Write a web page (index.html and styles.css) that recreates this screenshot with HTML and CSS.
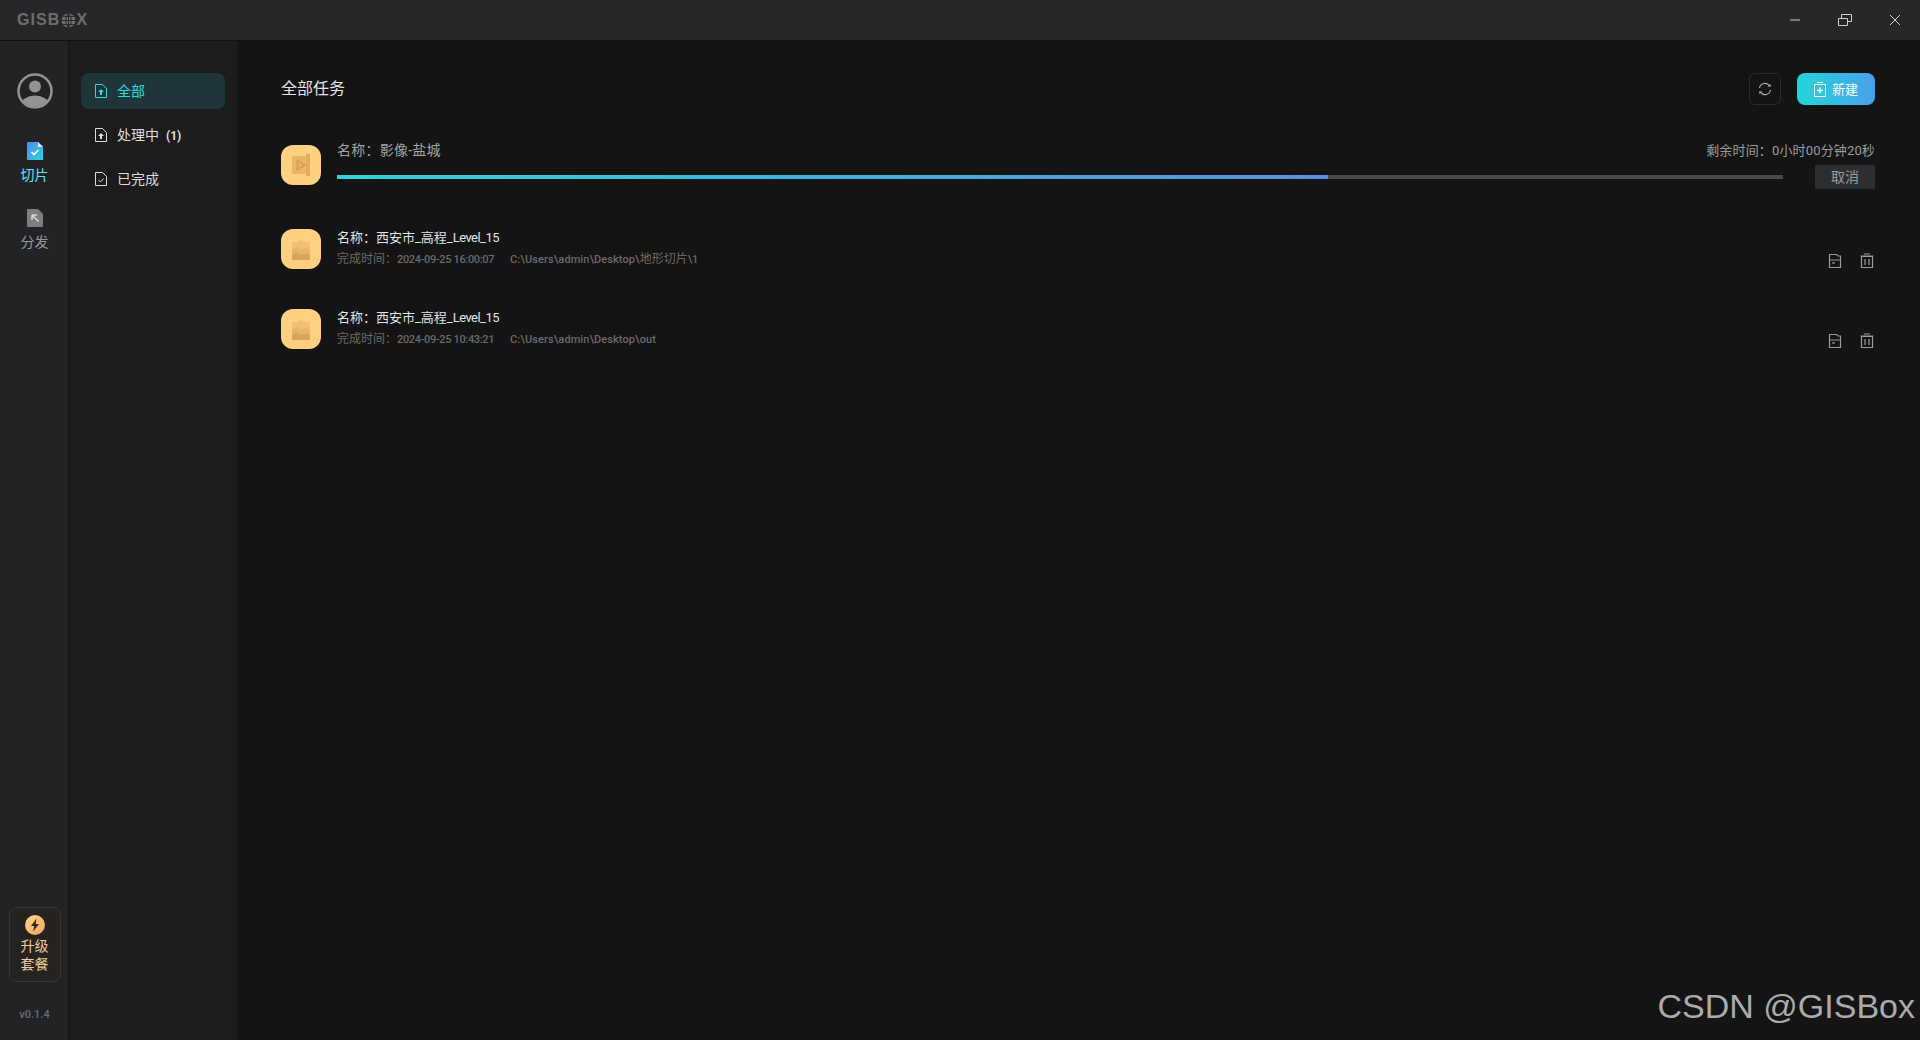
FILE: index.html
```html
<!DOCTYPE html>
<html lang="zh-CN">
<head>
<meta charset="utf-8">
<title>GISBox</title>
<link rel="stylesheet" href="styles.css">
</head>
<body>
<div class="app">
  <header class="titlebar">
    <div class="logo"><span>GISB</span><svg class="logo-globe" viewBox="0 0 14 14"><circle cx="7" cy="7" r="6.5" fill="#6e6e6e"/><path d="M0 7h14M7 0v14M2 3.2h10M2 10.8h10M7 .5C3.5 4 3.5 10 7 13.5M7 .5c3.500 3.500 3.500 9.500 0 13" fill="none" stroke="#262628" stroke-width=".9"/></svg><span>X</span></div>
    <div class="win-controls">
      <svg class="win-icon" viewBox="0 0 16 16"><path d="M3 8h10" stroke="#d0d0d0" stroke-width="1"/></svg>
      <svg class="win-icon" viewBox="0 0 16 16"><path d="M1.500 6.500h9v7h-9zM4.500 6.500v-4h10v7h-4" fill="none" stroke="#d0d0d0" stroke-width="1"/></svg>
      <svg class="win-icon" viewBox="0 0 16 16"><path d="M3 3l10 10M13 3L3 13" stroke="#d0d0d0" stroke-width="1"/></svg>
    </div>
  </header>
  <div class="workspace">
    <nav class="rail">
      <svg class="avatar" viewBox="0 0 36 36"><defs><clipPath id="av"><circle cx="18" cy="18" r="15.500"/></clipPath></defs><circle cx="18" cy="18" r="16.500" fill="#232325" stroke="#939395" stroke-width="2.500"/><circle cx="18" cy="13.500" r="6" fill="#939395"/><ellipse cx="18" cy="32" rx="14" ry="9.500" fill="#939395" clip-path="url(#av)"/></svg>
      <a class="rail-item active">
        <svg class="rail-icon" viewBox="0 0 16 18"><defs><linearGradient id="doc" x1="0" y1="0" x2="1" y2="1"><stop offset="0" stop-color="#5289f2"/><stop offset="1" stop-color="#2bd6d8"/></linearGradient></defs><path d="M1 0h10l5 5v12a1 1 0 0 1-1 1H1a1 1 0 0 1-1-1V1a1 1 0 0 1 1-1z" fill="url(#doc)"/><path d="M11 0l5 5h-5z" fill="#d5f0fb"/><path d="M4.500 10l2.500 2.500 4.500-4.500" fill="none" stroke="#fff" stroke-width="1.600"/></svg>
        <span>切片</span>
      </a>
      <a class="rail-item">
        <svg class="rail-icon" viewBox="0 0 16 18"><path d="M1 0h10l5 5v12a1 1 0 0 1-1 1H1a1 1 0 0 1-1-1V1a1 1 0 0 1 1-1z" fill="#7e7e80"/><path d="M5 6h5M5 6v5M5 6l6.500 6.500" fill="none" stroke="#d8d8d8" stroke-width="1.500"/></svg>
        <span>分发</span>
      </a>
      <div class="rail-spacer"></div>
      <div class="upgrade">
        <svg class="bolt" viewBox="0 0 20 20"><defs><linearGradient id="gold" x1="0" y1="0" x2="1" y2="1"><stop offset="0" stop-color="#ffd58c"/><stop offset="1" stop-color="#f0a55c"/></linearGradient></defs><circle cx="10" cy="10" r="10" fill="url(#gold)"/><path d="M11.500 3.500L6 11h3.200l-1 5.500L14 9h-3.300z" fill="#3a2a18"/></svg>
        <span>升级</span>
        <span>套餐</span>
      </div>
      <div class="version">v0.1.4</div>
    </nav>
    <aside class="sidebar">
      <a class="side-item active">
        <svg class="side-icon" viewBox="0 0 12 14"><path d="M.5.500h7l4 4v9H.5z" fill="none" stroke="currentColor"/><path d="M6 5l3 3H7v3H5V8H3z" fill="currentColor"/></svg>
        <span>全部</span>
      </a>
      <a class="side-item">
        <svg class="side-icon" viewBox="0 0 12 14"><path d="M.5.500h7l4 4v9H.5z" fill="none" stroke="currentColor"/><path d="M6 5l3 3H7v3H5V8H3z" fill="currentColor"/></svg>
        <span>处理中&nbsp;&nbsp;<b class="count">(1)</b></span>
      </a>
      <a class="side-item">
        <svg class="side-icon" viewBox="0 0 12 14"><path d="M.5.500h7l4 4v9H.5z" fill="none" stroke="currentColor"/><path d="M3.500 8l2 2 3-3.500" fill="none" stroke="currentColor"/></svg>
        <span>已完成</span>
      </a>
    </aside>
    <main class="main">
      <div class="main-head">
        <h1 class="main-title">全部任务</h1>
        <button class="btn-refresh">
          <svg class="refresh-icon" viewBox="0 0 14 14"><path d="M1.500 6A5.500 5.500 0 0 1 11.500 3.800M12.500 8A5.500 5.500 0 0 1 2.500 10.200" fill="none" stroke="#b0b0b0" stroke-width="1.200"/><path d="M13 4.500h-3.500l3-2.500zM1 9.500h3.500l-3 2.500z" fill="#b0b0b0"/></svg>
        </button>
        <button class="btn-new">
          <svg class="new-icon" viewBox="0 0 12 15"><path d="M.5 2.500h11v12H.5zM3 .5h6" fill="none" stroke="#fff"/><path d="M6 5.500v6M3 8.500h6" stroke="#fff" stroke-width="1.400"/></svg>
          <span>新建</span>
        </button>
      </div>
      <section class="tasks">
        <article class="task">
          <div class="task-icon"><svg class="task-glyph play" viewBox="0 0 18 22"><path d="M0 2h14v18H0z" fill="#eab768"/><path d="M14 0h4v22h-4z" fill="#e5ac5e"/><path d="M5.500 6.500l7 4.500-7 4.500z" fill="none" stroke="#d89f54" stroke-width="2"/></svg></div>
          <div class="task-body">
            <div class="progress-head">
              <span class="progress-name">名称&#xFF1A;影像-盐城</span>
              <span class="remaining">剩余时间&#xFF1A;0小时00分钟20秒</span>
            </div>
            <div class="progress-row">
              <div class="track"><div class="fill"></div></div>
              <button class="btn-cancel">取消</button>
            </div>
          </div>
        </article>
        <article class="task">
          <div class="task-icon"><svg class="task-glyph" viewBox="0 0 18 21"><path d="M0 3h5l4-3 3 3h6v18H0z" fill="#efc076"/><path d="M0 11l5-3 4 3 4-2 5 2v10H0z" fill="#e8b268"/><path d="M0 16l5-2 4 2 4-1 5 1v5H0z" fill="#dfa259"/></svg></div>
          <div class="task-body">
            <div class="task-name">名称&#xFF1A;西安市_高程_<span class="latin">Level_15</span></div>
            <div class="task-meta">完成时间&#xFF1A;<span class="latin">2024-09-25 16:00:07</span><span class="latin path">C:\Users\admin\Desktop\</span>地形切片<span class="latin">\1</span></div>
          </div>
          <div class="task-actions">
            <svg class="action-icon" viewBox="0 0 16 16"><path d="M2.500 7V1.500h7l1.500 1.500h2.500V14.500h-11V7h11" fill="none" stroke="#9a9a9a" stroke-width="1.200"/><path d="M5 10h3" stroke="#9a9a9a" stroke-width="1.200"/></svg>
            <svg class="action-icon" viewBox="0 0 16 16"><path d="M2.500 3.500h11v11h-11zM1.500 3h13M5 1h6" fill="none" stroke="#9a9a9a" stroke-width="1.200"/><path d="M6 6v6M10 6v6" stroke="#9a9a9a" stroke-width="1.200"/></svg>
          </div>
        </article>
        <article class="task">
          <div class="task-icon"><svg class="task-glyph" viewBox="0 0 18 21"><path d="M0 3h5l4-3 3 3h6v18H0z" fill="#efc076"/><path d="M0 11l5-3 4 3 4-2 5 2v10H0z" fill="#e8b268"/><path d="M0 16l5-2 4 2 4-1 5 1v5H0z" fill="#dfa259"/></svg></div>
          <div class="task-body">
            <div class="task-name">名称&#xFF1A;西安市_高程_<span class="latin">Level_15</span></div>
            <div class="task-meta">完成时间&#xFF1A;<span class="latin">2024-09-25 10:43:21</span><span class="latin path">C:\Users\admin\Desktop\out</span></div>
          </div>
          <div class="task-actions">
            <svg class="action-icon" viewBox="0 0 16 16"><path d="M2.500 7V1.500h7l1.500 1.500h2.500V14.500h-11V7h11" fill="none" stroke="#9a9a9a" stroke-width="1.200"/><path d="M5 10h3" stroke="#9a9a9a" stroke-width="1.200"/></svg>
            <svg class="action-icon" viewBox="0 0 16 16"><path d="M2.500 3.500h11v11h-11zM1.500 3h13M5 1h6" fill="none" stroke="#9a9a9a" stroke-width="1.200"/><path d="M6 6v6M10 6v6" stroke="#9a9a9a" stroke-width="1.200"/></svg>
          </div>
        </article>
      </section>
    </main>
  </div>
  <div class="watermark">CSDN @GISBox</div>
</div>
</body>
</html>
```
FILE: styles.css
```css
* { box-sizing: border-box; }
html, body { margin: 0; height: 100%; }
body {
  background: #141414;
  color: #ddd;
  font-family: Roboto, "Noto Sans CJK SC", sans-serif;
  font-size: 14px;
  overflow: hidden;
}
.app { position: relative; display: flex; flex-direction: column; height: 1040px; }

.titlebar {
  flex: none;
  height: 41px;
  display: flex;
  align-items: center;
  justify-content: space-between;
  background: #272729;
  border-bottom: 1px solid #111;
  padding-left: 17px;
}
.logo {
  display: flex;
  align-items: center;
  font-family: "Liberation Sans", sans-serif;
  font-weight: 700;
  font-size: 16px;
  letter-spacing: 1.1px;
  color: #6e6e6e;
}
.logo-globe { width: 15px; height: 15px; margin-right: 1px; }
.win-controls { display: flex; align-items: center; gap: 34px; padding-right: 17px; }
.win-icon { width: 16px; height: 16px; }

.workspace { flex: 1; display: flex; min-height: 0; }

.rail {
  flex: none;
  width: 69px;
  display: flex;
  flex-direction: column;
  align-items: center;
  background: #232325;
  border-right: 1px solid #111;
  padding: 32px 0 17px 1px;
}
.avatar { width: 36px; height: 36px; margin-bottom: 33px; }
.rail-item {
  display: flex;
  flex-direction: column;
  align-items: center;
  gap: 5px;
  color: #9a9a9c;
  font-size: 14px;
  line-height: 20px;
  margin-bottom: 24px;
}
.rail-item.active { color: #5fe3f2; }
.rail-icon { width: 16px; height: 18px; }
.rail-spacer { flex: 1; }
.upgrade {
  width: 52px;
  height: 75px;
  display: flex;
  flex-direction: column;
  align-items: center;
  padding-top: 7px;
  border: 1px solid #3a352e;
  border-radius: 8px;
  background: #242322;
  color: #f0cb98;
  font-size: 14px;
  line-height: 18px;
  margin-bottom: 25px;
}
.bolt { width: 20px; height: 20px; margin-bottom: 2px; }
.version { font-size: 11px; line-height: 16px; font-weight: 500; color: #667080; }

.sidebar {
  flex: none;
  width: 168px;
  display: flex;
  flex-direction: column;
  gap: 8px;
  background: #1c1c1c;
  padding: 32px 12px 0;
}
.side-item {
  height: 36px;
  display: flex;
  align-items: center;
  gap: 10px;
  padding-left: 14px;
  border-radius: 8px;
  color: #dcdcdc;
  font-size: 14px;
}
.side-item span { margin-top: -2px; }
.side-item.active { background: #203539; color: #2fdbe2; }
.side-icon { width: 12px; height: 14px; flex: none; }
.count { font-size: 12px; font-weight: 700; }

.main { flex: 1; min-width: 0; padding: 32px 45px 0 44px; }
.main-head { display: flex; align-items: center; height: 32px; gap: 16px; margin-bottom: 40px; }
.main-title { flex: 1; margin: -4px 0 0; font-size: 16px; font-weight: 400; color: #e4e4e4; }
.btn-refresh {
  width: 32px;
  height: 32px;
  display: flex;
  align-items: center;
  justify-content: center;
  padding: 0;
  background: transparent;
  border: 1px solid #2c2c2c;
  border-radius: 6px;
}
.refresh-icon { width: 14px; height: 14px; }
.btn-new {
  width: 78px;
  height: 32px;
  display: flex;
  align-items: center;
  justify-content: center;
  gap: 6px;
  padding: 0;
  border: 0;
  border-radius: 8px;
  background: linear-gradient(90deg, #21d6d8, #4b9eec);
  color: #fff;
  font: inherit;
  font-size: 13px;
}
.btn-new span { margin-top: -2px; }
.new-icon { width: 12px; height: 15px; }

.tasks { display: flex; flex-direction: column; gap: 40px; }
.task { display: flex; gap: 16px; }
.task-icon {
  flex: none;
  width: 40px;
  height: 40px;
  display: flex;
  align-items: center;
  justify-content: center;
  border-radius: 12px;
  background: #ffd07f;
}
.task-glyph { width: 18px; height: 21px; }
.task-glyph.play { height: 22px; }
.task-body { flex: 1; min-width: 0; }

.progress-head {
  display: flex;
  justify-content: space-between;
  align-items: center;
  height: 20px;
  margin-top: -6px;
  color: #a4a4a4;
  font-size: 14px;
}
.remaining { font-size: 13px; color: #9c9c9c; letter-spacing: 0.15px; }
.progress-name { letter-spacing: 0.25px; }
.progress-row { display: flex; align-items: center; gap: 32px; margin-top: 6px; }
.track { flex: 1; height: 4px; background: #4a4a4a; }
.fill { width: 68.5%; height: 100%; background: linear-gradient(90deg, #2bd5d8, #5b8ede); }
.btn-cancel {
  flex: none;
  width: 60px;
  height: 24px;
  padding: 0 0 2px;
  border: 0;
  border-radius: 2px;
  background: #2e2e30;
  color: #9c9c9c;
  font: inherit;
  font-size: 14px;
}

.task-name { margin-top: -1px; height: 20px; line-height: 20px; font-size: 13px; color: #e2e2e2; }
.task-name .latin { letter-spacing: -0.55px; }
.task-meta { margin-top: 3px; height: 16px; line-height: 16px; font-size: 12px; color: #6a6a6a; }
.task-meta .latin { font-size: 11px; font-weight: 500; letter-spacing: -0.34px; }
.task-meta .path { margin-left: 16px; letter-spacing: 0.08px; }
.task-actions { display: flex; align-items: flex-end; gap: 16px; }
.action-icon { width: 16px; height: 16px; }

.watermark {
  position: absolute;
  right: 5px;
  bottom: 14px;
  font-family: "Liberation Sans", sans-serif;
  font-size: 34px;
  line-height: 40px;
  color: #ababab;
}
```
